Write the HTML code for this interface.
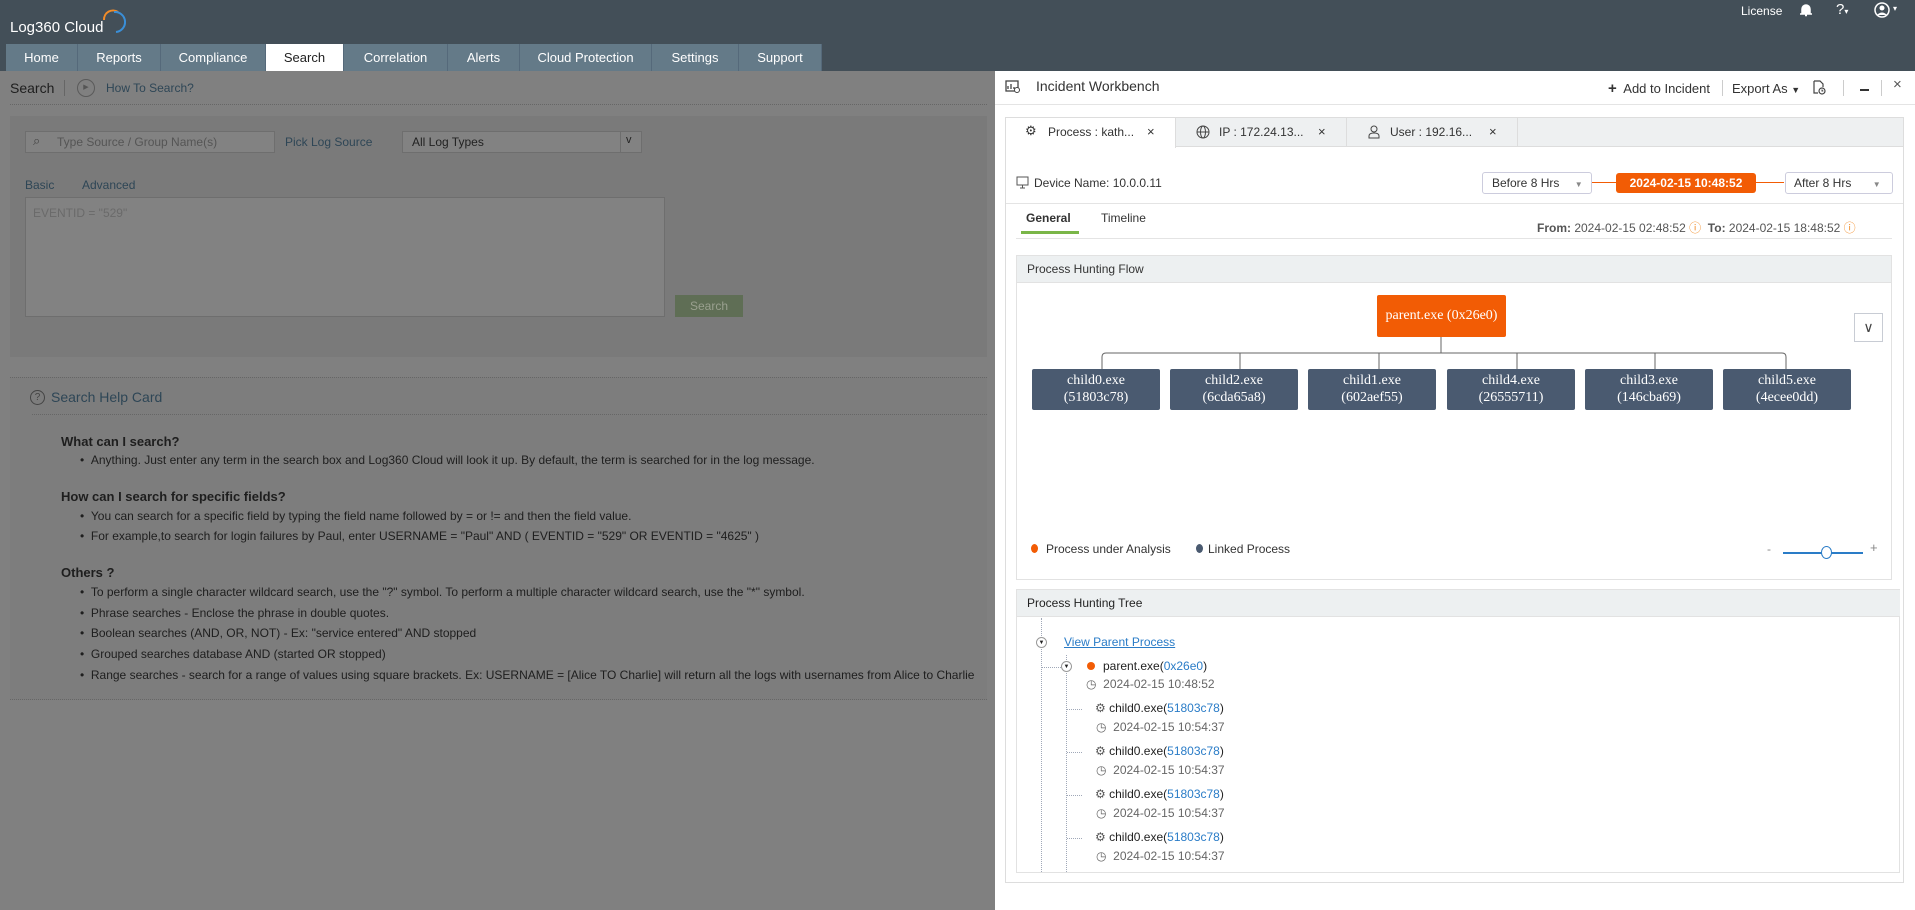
<!DOCTYPE html>
<html><head><meta charset="utf-8"><style>
*{box-sizing:border-box;margin:0;padding:0}
body{width:1915px;height:910px;overflow:hidden;background:#808080;font-family:"Liberation Sans",sans-serif;font-size:13px;position:relative;color:#222}
.a{position:absolute;white-space:nowrap}
.hdr{position:absolute;left:0;top:0;width:1915px;height:71px;background:#434f58}
.tab{position:absolute;top:44px;height:27px;background:#647a88;color:#fff;font-size:13px;line-height:27px;text-align:center;border-right:1px solid #55697a}
.lt{color:#1e1e1e}
.panel{position:absolute;left:995px;top:71px;width:920px;height:839px;background:#fff}
.node{position:absolute;top:369px;width:128px;height:41px;background:#4a5a70;color:#fff;font-family:"Liberation Serif",serif;font-size:14px;text-align:center;line-height:17px;padding-top:3px;border-radius:2px}
.blue{color:#2a7cc7}
.gr{color:#666}
</style></head><body>
<div class="hdr"></div>
<div class="a" style="left:10px;top:19px;color:#fff;font-size:15px">Log360 Cloud</div>
<svg class="a" style="left:100px;top:6px" width="26" height="28"><path d="M4 14 A9 9 0 0 1 18 6" stroke="#f28c28" stroke-width="2" fill="none"/><path d="M14 6 A10 10 0 0 1 16 26" stroke="#3a8fd8" stroke-width="2" fill="none"/></svg>
<div class="a" style="left:1741px;top:4px;color:#fff;font-size:12px">License</div>
<svg class="a" style="left:1799px;top:3px" width="14" height="14"><path d="M3 11 L3 6 A4 4 0 0 1 11 6 L11 11 Z M1 11 H13 M6 12.5 H8" stroke="#fff" stroke-width="1.5" fill="#fff"/></svg>
<div class="a" style="left:1836px;top:1px;color:#fff;font-size:15px">?<span style="font-size:8px">▾</span></div>
<svg class="a" style="left:1874px;top:2px" width="16" height="16"><circle cx="8" cy="8" r="7" fill="none" stroke="#fff" stroke-width="1.5"/><circle cx="8" cy="6" r="2.5" fill="#fff"/><path d="M3 13 Q8 8 13 13" fill="#fff"/></svg>
<div class="a" style="left:1893px;top:4px;color:#fff;font-size:8px">▾</div>
<div class="tab" style="left:6px;width:72px">Home</div>
<div class="tab" style="left:78px;width:83px">Reports</div>
<div class="tab" style="left:161px;width:105px">Compliance</div>
<div class="tab" style="left:266px;width:78px;background:#fff;color:#222">Search</div>
<div class="tab" style="left:344px;width:104px">Correlation</div>
<div class="tab" style="left:448px;width:72px">Alerts</div>
<div class="tab" style="left:520px;width:132px">Cloud Protection</div>
<div class="tab" style="left:652px;width:87px">Settings</div>
<div class="tab" style="left:739px;width:83px">Support</div>

<!-- left dimmed content -->
<div class="a lt" style="left:10px;top:80px;font-size:14px">Search</div>
<div class="a" style="left:64px;top:80px;width:1px;height:16px;background:#666"></div>
<div class="a" style="left:77px;top:79px;width:18px;height:18px;border:1px solid #5a5a5a;border-radius:50%;font-size:7px;text-align:center;line-height:16px;color:#555">▶</div>
<div class="a" style="left:106px;top:81px;color:#2e4656;font-size:12px">How To Search?</div>
<div class="a" style="left:10px;top:104px;width:977px;border-top:1px dotted #666"></div>
<div class="a" style="left:10px;top:116px;width:977px;height:241px;background:#7a7a7a"></div>
<div class="a" style="left:25px;top:131px;width:250px;height:22px;background:#828282;border:1px solid #6e6e6e"></div>
<div class="a" style="left:33px;top:133px;color:#444;font-size:13px">⌕</div>
<div class="a" style="left:57px;top:135px;color:#555;font-size:12px">Type Source / Group Name(s)</div>
<div class="a" style="left:285px;top:135px;color:#2e4656;font-size:12px">Pick Log Source</div>
<div class="a" style="left:402px;top:131px;width:240px;height:22px;background:#828282;border:1px solid #6e6e6e"></div>
<div class="a" style="left:412px;top:135px;color:#222;font-size:12px">All Log Types</div>
<div class="a" style="left:620px;top:132px;width:1px;height:20px;background:#6e6e6e"></div>
<div class="a" style="left:626px;top:134px;color:#222;font-size:11px">v</div>
<div class="a" style="left:25px;top:178px;color:#2e4656;font-size:12px">Basic</div>
<div class="a" style="left:82px;top:178px;color:#2e4656;font-size:12px">Advanced</div>
<div class="a" style="left:25px;top:197px;width:640px;height:120px;background:#828282;border:1px solid #6e6e6e"></div>
<div class="a" style="left:33px;top:206px;color:#6a6a6a;font-size:12px">EVENTID = "529"</div>
<div class="a" style="left:675px;top:295px;width:68px;height:22px;background:#5f6e55;color:#9aa08f;font-size:12px;text-align:center;line-height:22px">Search</div>
<div class="a" style="left:10px;top:377px;width:977px;height:323px;background:#7d7d7d;border-top:1px dotted #666;border-bottom:1px dotted #666;overflow:hidden"></div>
<div class="a" style="left:30px;top:390px;width:15px;height:15px;border:1px solid #444;border-radius:50%;font-size:10px;text-align:center;line-height:13px;color:#444">?</div>
<div class="a" style="left:51px;top:389px;color:#2e4656;font-size:14px">Search Help Card</div>
<div class="a" style="left:32px;top:414px;width:955px;border-top:1px dotted #666"></div>
<div class="a lt" style="left:61px;top:434px;font-weight:bold">What can I search?</div>
<div class="a lt" style="left:80px;top:453px;font-size:12px">•&nbsp;&nbsp;Anything. Just enter any term in the search box and Log360 Cloud will look it up. By default, the term is searched for in the log message.</div>
<div class="a lt" style="left:61px;top:489px;font-weight:bold">How can I search for specific fields?</div>
<div class="a lt" style="left:80px;top:509px;font-size:12px">•&nbsp;&nbsp;You can search for a specific field by typing the field name followed by = or != and then the field value.</div>
<div class="a lt" style="left:80px;top:529px;font-size:12px">•&nbsp;&nbsp;For example,to search for login failures by Paul, enter USERNAME = "Paul" AND ( EVENTID = "529" OR EVENTID = "4625" )</div>
<div class="a lt" style="left:61px;top:565px;font-weight:bold">Others ?</div>
<div class="a lt" style="left:80px;top:585px;font-size:12px">•&nbsp;&nbsp;To perform a single character wildcard search, use the "?" symbol. To perform a multiple character wildcard search, use the "*" symbol.</div>
<div class="a lt" style="left:80px;top:606px;font-size:12px">•&nbsp;&nbsp;Phrase searches - Enclose the phrase in double quotes.</div>
<div class="a lt" style="left:80px;top:626px;font-size:12px">•&nbsp;&nbsp;Boolean searches (AND, OR, NOT) - Ex: "service entered" AND stopped</div>
<div class="a lt" style="left:80px;top:647px;font-size:12px">•&nbsp;&nbsp;Grouped searches database AND (started OR stopped)</div>
<div class="a lt" style="left:80px;top:668px;font-size:12px;width:915px;overflow:hidden">•&nbsp;&nbsp;Range searches - search for a range of values using square brackets. Ex: USERNAME = [Alice TO Charlie] will return all the logs with usernames from Alice to Charlie</div>

<!-- panel -->
<div class="panel"></div>
<svg class="a" style="left:1005px;top:80px" width="16" height="14"><rect x="1" y="1" width="12" height="10" fill="none" stroke="#444" stroke-width="1.3"/><path d="M3 9V6M6 9V4M9 9V7" stroke="#444" stroke-width="1.3"/><circle cx="12" cy="10" r="2.5" fill="#fff" stroke="#444"/></svg>
<div class="a" style="left:1036px;top:78px;font-size:14px;color:#333">Incident Workbench</div>
<div class="a" style="left:1608px;top:80px;font-size:13px;color:#333"><b style="font-size:15px">+</b>&nbsp; Add to Incident</div>
<div class="a" style="left:1722px;top:80px;width:1px;height:16px;background:#ccc"></div>
<div class="a" style="left:1732px;top:81px;font-size:13px;color:#333">Export As <span style="font-size:9px">▼</span></div>
<svg class="a" style="left:1812px;top:80px" width="14" height="15"><path d="M2 1H8L11 4V7M2 1V13H6" fill="none" stroke="#444" stroke-width="1.2"/><circle cx="10" cy="11" r="3" fill="none" stroke="#444" stroke-width="1.2"/><path d="M10 9.5V11H11.3" stroke="#444"/></svg>
<div class="a" style="left:1843px;top:80px;width:1px;height:16px;background:#ccc"></div>
<div class="a" style="left:1860px;top:89px;width:9px;height:1.5px;background:#333"></div>
<div class="a" style="left:1881px;top:80px;width:1px;height:16px;background:#ccc"></div>
<div class="a" style="left:1893px;top:76px;font-size:15px;color:#555">×</div>
<div class="a" style="left:995px;top:104px;width:920px;height:1px;background:#e4e4e4"></div>

<div class="a" style="left:1005px;top:117px;width:899px;height:766px;border:1px solid #ddd"></div>
<div class="a" style="left:1006px;top:118px;width:897px;height:29px;background:#eef0f1;border-bottom:1px solid #ddd"></div>
<div class="a" style="left:1006px;top:118px;width:170px;height:30px;background:#fff;border-right:1px solid #ddd"></div>
<div class="a" style="left:1176px;top:118px;width:171px;height:29px;border-right:1px solid #ddd"></div>
<div class="a" style="left:1347px;top:118px;width:171px;height:29px;border-right:1px solid #ddd"></div>
<div class="a" style="left:1025px;top:123px;font-size:13px;color:#333">⚙</div>
<div class="a" style="left:1048px;top:125px;font-size:12px;color:#333">Process : kath...</div>
<div class="a" style="left:1147px;top:124px;font-size:13px;color:#333">×</div>
<svg class="a" style="left:1196px;top:125px" width="14" height="14"><circle cx="7" cy="7" r="6" fill="none" stroke="#444"/><ellipse cx="7" cy="7" rx="2.5" ry="6" fill="none" stroke="#444"/><path d="M1 7H13" stroke="#444"/></svg>
<div class="a" style="left:1219px;top:125px;font-size:12px;color:#333">IP : 172.24.13...</div>
<div class="a" style="left:1318px;top:124px;font-size:13px;color:#333">×</div>
<svg class="a" style="left:1368px;top:125px" width="12" height="14"><circle cx="6" cy="4" r="3" fill="none" stroke="#444"/><path d="M1 13V11Q1 8 6 8Q11 8 11 11V13Z" fill="none" stroke="#444"/></svg>
<div class="a" style="left:1390px;top:125px;font-size:12px;color:#333">User : 192.16...</div>
<div class="a" style="left:1489px;top:124px;font-size:13px;color:#333">×</div>

<svg class="a" style="left:1016px;top:176px" width="13" height="13"><rect x="1" y="1" width="11" height="8" fill="none" stroke="#555"/><path d="M4 12H9M6.5 9V12" stroke="#555"/></svg>
<div class="a" style="left:1034px;top:176px;font-size:12px;color:#333">Device Name: 10.0.0.11</div>
<div class="a" style="left:1482px;top:172px;width:110px;height:22px;border:1px solid #ccd;border-radius:3px;font-size:12px;line-height:20px;padding-left:9px;color:#333">Before 8 Hrs <span style="font-size:8px;color:#888;margin-left:12px">▼</span></div>
<div class="a" style="left:1592px;top:182px;width:192px;height:1px;background:#f25c05"></div>
<div class="a" style="left:1616px;top:173px;width:140px;height:20px;background:#f25c05;border-radius:3px;color:#fff;font-size:12px;font-weight:bold;text-align:center;line-height:20px">2024-02-15 10:48:52</div>
<div class="a" style="left:1785px;top:172px;width:108px;height:22px;background:#fff;border:1px solid #ccd;border-radius:3px;font-size:12px;line-height:20px;padding-left:8px;color:#333">After 8 Hrs <span style="font-size:8px;color:#888;margin-left:18px">▼</span></div>
<div class="a" style="left:1006px;top:203px;width:897px;height:1px;background:#e4e4e4"></div>
<div class="a" style="left:1026px;top:211px;font-size:12px;font-weight:bold;color:#333">General</div>
<div class="a" style="left:1101px;top:211px;font-size:12px;color:#333">Timeline</div>
<div class="a" style="left:1021px;top:231px;width:58px;height:3px;background:#7ab648"></div>
<div class="a" style="left:1016px;top:238px;width:876px;height:1px;background:#e4e4e4"></div>
<div class="a" style="left:1537px;top:219px;font-size:12px;color:#555"><b>From:</b> 2024-02-15 02:48:52 <span style="color:#f28c28">ⓘ</span>&nbsp; <b>To:</b> 2024-02-15 18:48:52 <span style="color:#f28c28">ⓘ</span></div>

<div class="a" style="left:1016px;top:255px;width:876px;height:325px;border:1px solid #e2e2e2"></div>
<div class="a" style="left:1017px;top:256px;width:874px;height:27px;background:#edf0f1;border-bottom:1px solid #e2e2e2"></div>
<div class="a" style="left:1027px;top:262px;font-size:12px;color:#333">Process Hunting Flow</div>
<div class="a" style="left:1377px;top:295px;width:129px;height:42px;background:#f25c05;color:#fff;font-family:'Liberation Serif',serif;font-size:14px;text-align:center;line-height:42px;border-radius:2px">parent.exe (0x26e0)</div>
<svg class="a" style="left:1030px;top:337px" width="830" height="34"><path d="M411 0V16M72 32V20Q72 16 76 16H752Q756 16 756 20V32M210 16V32M349 16V32M487 16V32M625 16V32" fill="none" stroke="#666" stroke-width="1"/></svg>
<div class="node" style="left:1032px">child0.exe<br>(51803c78)</div>
<div class="node" style="left:1170px">child2.exe<br>(6cda65a8)</div>
<div class="node" style="left:1308px">child1.exe<br>(602aef55)</div>
<div class="node" style="left:1447px">child4.exe<br>(26555711)</div>
<div class="node" style="left:1585px">child3.exe<br>(146cba69)</div>
<div class="node" style="left:1723px">child5.exe<br>(4ecee0dd)</div>
<div class="a" style="left:1854px;top:313px;width:29px;height:29px;border:1px solid #c8ccd4;text-align:center;line-height:26px;color:#444;font-size:14px">∨</div>
<div class="a" style="left:1031px;top:544px;width:7px;height:9px;border-radius:50%;background:#f25c05"></div>
<div class="a" style="left:1046px;top:542px;font-size:12px;color:#333">Process under Analysis</div>
<div class="a" style="left:1196px;top:544px;width:7px;height:9px;border-radius:50%;background:#4a5a70"></div>
<div class="a" style="left:1208px;top:542px;font-size:12px;color:#333">Linked Process</div>
<div class="a" style="left:1767px;top:542px;font-size:12px;color:#888">-</div>
<div class="a" style="left:1783px;top:552px;width:80px;height:2px;background:#2a7cc7"></div>
<div class="a" style="left:1821px;top:546px;width:11px;height:13px;border:1.5px solid #2a7cc7;border-radius:50%;background:#fff"></div>
<div class="a" style="left:1870px;top:540px;font-size:13px;color:#888">+</div>

<div class="a" style="left:1016px;top:589px;width:884px;height:284px;border:1px solid #e2e2e2"></div>
<div class="a" style="left:1017px;top:590px;width:883px;height:27px;background:#edf0f1;border-bottom:1px solid #e2e2e2"></div>
<div class="a" style="left:1027px;top:596px;font-size:12px;color:#222">Process Hunting Tree</div>
<div class="a" style="left:1041px;top:618px;height:254px;border-left:1px dotted #a0a8b8"></div>
<div class="a" style="left:1066px;top:655px;height:217px;border-left:1px dotted #a0a8b8"></div>
<div class="a" style="left:1041px;top:667px;width:20px;border-top:1px dotted #a0a8b8"></div>
<div class="a" style="left:1036px;top:637px;width:11px;height:11px;border:1px solid #999;border-radius:50%;background:#fff;font-size:6px;text-align:center;line-height:10px">▼</div>
<div class="a" style="left:1061px;top:661px;width:11px;height:11px;border:1px solid #999;border-radius:50%;background:#fff;font-size:6px;text-align:center;line-height:10px">▼</div>
<div class="a blue" style="left:1064px;top:635px;font-size:12px;text-decoration:underline">View Parent Process</div>
<div class="a" style="left:1087px;top:662px;width:8px;height:8px;border-radius:50%;background:#f25c05"></div>
<div class="a" style="left:1103px;top:659px;font-size:12px;color:#222">parent.exe(<span class="blue">0x26e0</span>)</div>
<div class="a gr" style="left:1086px;top:677px;font-size:12px">◷&nbsp; 2024-02-15 10:48:52</div>
<div class="a" style="left:1067px;top:709px;width:15px;border-top:1px dotted #a0a8b8"></div>
<div class="a" style="left:1067px;top:752px;width:15px;border-top:1px dotted #a0a8b8"></div>
<div class="a" style="left:1067px;top:795px;width:15px;border-top:1px dotted #a0a8b8"></div>
<div class="a" style="left:1067px;top:838px;width:15px;border-top:1px dotted #a0a8b8"></div>
<div class="a" style="left:1095px;top:701px;font-size:12px;color:#222"><span style="color:#555">⚙</span> child0.exe(<span class="blue">51803c78</span>)</div>
<div class="a gr" style="left:1096px;top:720px;font-size:12px">◷&nbsp; 2024-02-15 10:54:37</div>
<div class="a" style="left:1095px;top:744px;font-size:12px;color:#222"><span style="color:#555">⚙</span> child0.exe(<span class="blue">51803c78</span>)</div>
<div class="a gr" style="left:1096px;top:763px;font-size:12px">◷&nbsp; 2024-02-15 10:54:37</div>
<div class="a" style="left:1095px;top:787px;font-size:12px;color:#222"><span style="color:#555">⚙</span> child0.exe(<span class="blue">51803c78</span>)</div>
<div class="a gr" style="left:1096px;top:806px;font-size:12px">◷&nbsp; 2024-02-15 10:54:37</div>
<div class="a" style="left:1095px;top:830px;font-size:12px;color:#222"><span style="color:#555">⚙</span> child0.exe(<span class="blue">51803c78</span>)</div>
<div class="a gr" style="left:1096px;top:849px;font-size:12px">◷&nbsp; 2024-02-15 10:54:37</div>
</body></html>
